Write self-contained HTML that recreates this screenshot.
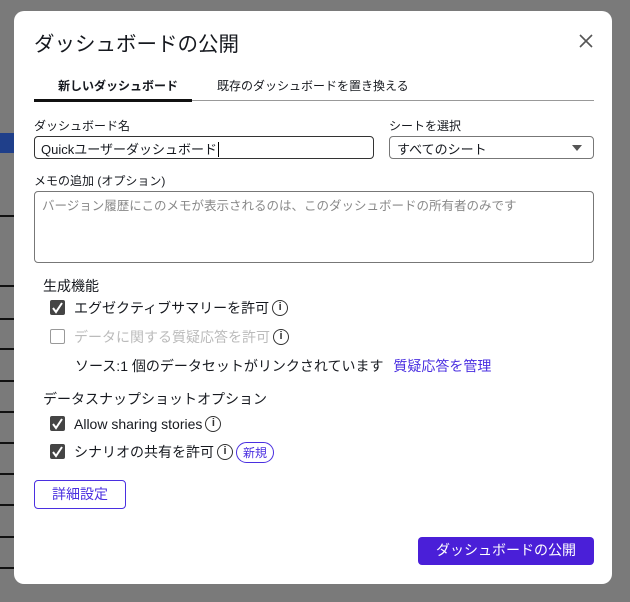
<!DOCTYPE html>
<html><head><meta charset="utf-8"><style>
*{box-sizing:border-box;margin:0;padding:0}
body{width:630px;height:602px;background:#7a7a7a;font-family:"Liberation Sans","Noto Sans CJK JP",sans-serif;position:relative;overflow:hidden;color:#16191f}
.bgl{position:absolute;left:0;width:14px;height:2px;background:#111}
.modal{position:absolute;left:14px;top:11px;width:598px;height:573px;background:#fff;border-radius:10px}
.a{position:absolute;white-space:nowrap}
.f{display:flex;align-items:center}
.cb{position:absolute;width:15px;height:15px;border-radius:2px;background:#444;}
.cb svg{position:absolute;left:1px;top:1px}
.info{display:inline-block;width:16px;height:16px;border:1.5px solid #333;border-radius:50%;font-size:11px;text-align:center;line-height:13px;font-weight:bold;margin-left:3px;color:#333}
</style></head><body>
<div class="bgl" style="top:150px"></div><div class="bgl" style="top:215px"></div><div class="bgl" style="top:285px"></div><div class="bgl" style="top:318px"></div><div class="bgl" style="top:348px"></div><div class="bgl" style="top:380px"></div><div class="bgl" style="top:411px"></div><div class="bgl" style="top:442px"></div><div class="bgl" style="top:473px"></div><div class="bgl" style="top:504px"></div><div class="bgl" style="top:536px"></div><div class="bgl" style="top:567px"></div>
<div style="position:absolute;left:0;top:133px;width:14px;height:20px;background:#1f3f8a"></div>
<div class="modal">
<div class="a" style="left:20px;top:16px;font-size:20.5px">ダッシュボードの公開</div>
<svg class="a" style="left:565px;top:23px" width="14" height="14"><path d="M1 1L13 13M13 1L1 13" stroke="#555" stroke-width="1.6"/></svg>
<div class="a" style="left:44px;top:66px;font-size:12px;font-weight:bold">新しいダッシュボード</div>
<div class="a" style="left:203px;top:66px;font-size:12px">既存のダッシュボードを置き換える</div>
<div class="a" style="left:20px;top:89px;width:560px;height:1px;background:#999"></div>
<div class="a" style="left:20px;top:88px;width:158px;height:3px;background:#111"></div>
<div class="a" style="left:20px;top:106px;font-size:12px">ダッシュボード名</div>
<div class="a" style="left:375px;top:106px;font-size:12px">シートを選択</div>
<div class="a" style="left:20px;top:125px;width:340px;height:23px;border:1px solid #333;border-radius:4px;font-size:13px;padding:2px 0 0 6px">Quickユーザーダッシュボード<span style="border-left:1px solid #000;margin-left:1px"></span></div>
<div class="a" style="left:375px;top:125px;width:205px;height:23px;border:1px solid #777;border-radius:4px;font-size:13px;padding:2px 0 0 7px">すべてのシート</div>
<div class="a" style="left:558px;top:134px;border:5px solid transparent;border-top:6px solid #555"></div>
<div class="a" style="left:20px;top:161px;font-size:12px">メモの追加 (オプション)</div>
<div class="a" style="left:20px;top:180px;width:560px;height:72px;border:1px solid #777;border-radius:4px;font-size:12.5px;color:#888;padding:3px 0 0 7px">バージョン履歴にこのメモが表示されるのは、このダッシュボードの所有者のみです</div>
<div class="a" style="left:29px;top:265px;font-size:14px">生成機能</div>
<div class="cb" style="left:36px;top:289px"><svg width="13" height="13"><path d="M2 7L5 11L11 2" stroke="#fff" stroke-width="2" fill="none"/></svg></div>
<div class="a f" style="left:60px;top:287px;font-size:14px;height:20px">エグゼクティブサマリーを許可<span class="info">i</span></div>
<div class="cb" style="left:36px;top:318px;background:#fff;border:1px solid #999"></div>
<div class="a f" style="left:60px;top:316px;font-size:14px;color:#bbb;height:20px">データに関する質疑応答を許可<span class="info">i</span></div>
<div class="a" style="left:61px;top:345px;font-size:14px">ソース:1 個のデータセットがリンクされています <span style="color:#4a2fe0;margin-left:6px">質疑応答を管理</span></div>
<div class="a" style="left:29px;top:378px;font-size:14px">データスナップショットオプション</div>
<div class="cb" style="left:36px;top:405px"><svg width="13" height="13"><path d="M2 7L5 11L11 2" stroke="#fff" stroke-width="2" fill="none"/></svg></div>
<div class="a f" style="left:60px;top:403px;font-size:14px;height:20px">Allow sharing stories<span class="info">i</span></div>
<div class="cb" style="left:36px;top:433px"><svg width="13" height="13"><path d="M2 7L5 11L11 2" stroke="#fff" stroke-width="2" fill="none"/></svg></div>
<div class="a f" style="left:60px;top:431px;font-size:14px;height:20px">シナリオの共有を許可<span class="info">i</span><span style="display:inline-block;border:1px solid #4a2fe0;color:#4a2fe0;border-radius:12px;font-size:12px;padding:1px 6px;margin-left:3px">新規</span></div>
<div class="a" style="left:20px;top:469px;width:92px;height:29px;border:1px solid #4a2fe0;border-radius:4px;color:#4a2fe0;font-size:14px;text-align:center;line-height:26px">詳細設定</div>
<div class="a" style="left:404px;top:526px;width:176px;height:28px;background:#4a1fd8;border-radius:4px;color:#fff;font-size:14px;text-align:center;line-height:27px">ダッシュボードの公開</div>
</div>
</body></html>
